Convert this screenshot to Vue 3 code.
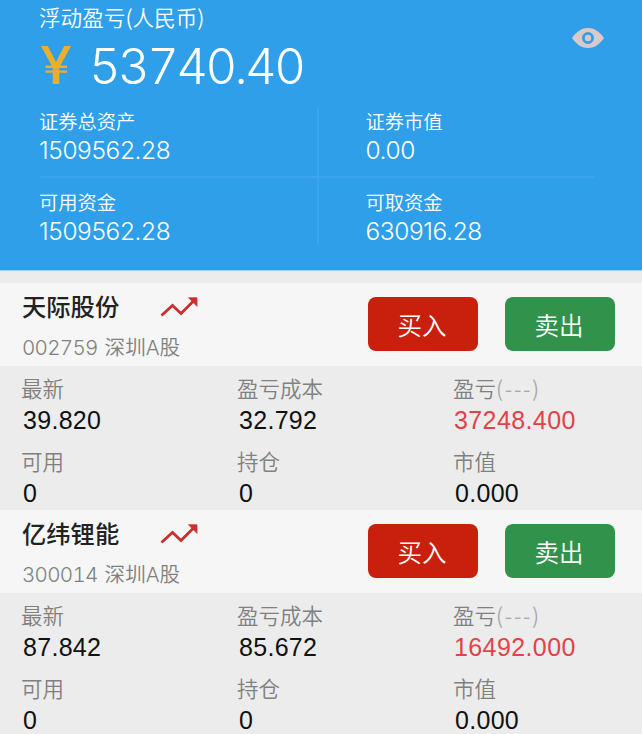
<script setup>
const assets = [
  { label: '证券总资产', value: '1509562.28' },
  { label: '证券市值', value: '0.00' },
  { label: '可用资金', value: '1509562.28' },
  { label: '可取资金', value: '630916.28' },
]

const stocks = [
  {
    name: '天际股份',
    code: '002759',
    market: '深圳A股',
    price: '39.820',
    cost: '32.792',
    profit: '37248.400',
    available: '0',
    position: '0',
    total: '0.000',
  },
  {
    name: '亿纬锂能',
    code: '300014',
    market: '深圳A股',
    price: '87.842',
    cost: '85.672',
    profit: '16492.000',
    available: '0',
    position: '0',
    total: '0.000',
  },
]
</script>

<template>
  <div class="page">
    <header class="summary">
      <div class="summary-top">
        <div>
          <div class="summary-title">浮动盈亏(人民币)</div>
          <div class="summary-total">
            <svg class="yen" viewBox="0 0 30 38" width="30" height="38">
              <path d="M0 0 H6.8 L15 16 L23.2 0 H30 L18.3 21.5 V38 H11.7 V21.5 Z" fill="#eab02c" />
              <path d="M4.5 20.8 H26 M4.5 25.6 H26" stroke="#eab02c" stroke-width="2.4" />
              <path d="M4.5 23.2 H26" stroke="#309fea" stroke-width="0.9" opacity="0.45" />
            </svg>
            <span>53740.40</span>
          </div>
        </div>
        <svg class="eye" viewBox="0 0 32 20" width="32" height="20">
          <path d="M0 10 C5 3 10 0 16 0 S27 3 32 10 C27 17 22 20 16 20 S5 17 0 10Z" fill="#d9c9cb" />
          <circle cx="16" cy="10" r="4.6" fill="none" stroke="#309fea" stroke-width="2.8" />
        </svg>
      </div>

      <div class="assets">
        <div v-for="item in assets" :key="item.label" class="asset">
          <div class="asset-label">{{ item.label }}</div>
          <div class="asset-value">{{ item.value }}</div>
        </div>
      </div>
    </header>

    <section v-for="stock in stocks" :key="stock.code" class="stock">
      <div class="stock-head">
        <div class="stock-info">
          <div class="stock-name">
            <span>{{ stock.name }}</span>
            <svg class="trend" viewBox="0 0 38 22" width="38" height="22">
              <path d="M1.5 18.5 L12.5 8.5 L21 16.5 L33 4.5" fill="none" stroke="#c93030" stroke-width="2.8" />
              <path d="M28.5 0.8 H37 V9.3 Z" fill="#c93030" stroke="#c93030" stroke-width="0.8" />
            </svg>
          </div>
          <div class="stock-code"><span class="code">{{ stock.code }}</span> {{ stock.market }}</div>
        </div>
        <div class="actions">
          <button class="btn buy">买入</button>
          <button class="btn sell">卖出</button>
        </div>
      </div>

      <div class="stock-body">
        <div class="cell">
          <div class="cell-label">最新</div>
          <div class="cell-value">{{ stock.price }}</div>
        </div>
        <div class="cell">
          <div class="cell-label">盈亏成本</div>
          <div class="cell-value">{{ stock.cost }}</div>
        </div>
        <div class="cell">
          <div class="cell-label">盈亏<span class="muted">(---)</span></div>
          <div class="cell-value up">{{ stock.profit }}</div>
        </div>
        <div class="cell">
          <div class="cell-label">可用</div>
          <div class="cell-value">{{ stock.available }}</div>
        </div>
        <div class="cell">
          <div class="cell-label">持仓</div>
          <div class="cell-value">{{ stock.position }}</div>
        </div>
        <div class="cell">
          <div class="cell-label">市值</div>
          <div class="cell-value">{{ stock.total }}</div>
        </div>
      </div>
    </section>
  </div>
</template>

<style>
body {
  margin: 0;
  overflow: hidden;
}
</style>

<style scoped>
.page {
  width: 642px;
  height: 734px;
  overflow: hidden;
  background: #ececec;
  font-family: 'Liberation Sans', 'Noto Sans CJK SC', sans-serif;
}

.summary {
  box-sizing: border-box;
  height: 271px;
  margin-bottom: 12px;
  padding: 2px 0 0 39px;
  border-bottom: 1px solid #a0d2f4;
  background: #309fea;
  color: #fff;
  font-family: Inter, 'Noto Sans CJK SC', sans-serif;
  font-weight: 300;
}

.summary-top {
  display: flex;
  justify-content: space-between;
  height: 105px;
  padding-right: 38px;
}

.summary-title {
  height: 30px;
  line-height: 30px;
  font-size: 21.6px;
  font-family: 'Noto Sans CJK SC', sans-serif;
  font-weight: 350;
}

.summary-total {
  display: flex;
  align-items: center;
  height: 69px;
  font-size: 49px;
  line-height: 69px;
  letter-spacing: -2.6px;
  font-variant-numeric: tabular-nums;
}

.yen {
  margin: -3px 18px 0 2px;
}

.eye {
  margin-top: 26px;
}

.assets {
  position: relative;
  display: grid;
  grid-template-columns: 326.5px 1fr;
  grid-template-rows: 80.5px 80.5px;
}

/* тонкие линии между ячейками */
.assets::before,
.assets::after {
  content: '';
  position: absolute;
  background: #3ba5ef;
}

.assets::before {
  top: 69px;
  left: 1px;
  width: 555px;
  height: 2px;
}

.assets::after {
  top: 1px;
  left: 278px;
  width: 2px;
  height: 137px;
}

.asset-label {
  height: 28px;
  line-height: 28px;
  font-size: 19.3px;
  font-family: 'Noto Sans CJK SC', sans-serif;
  font-weight: 350;
}

.asset-value {
  height: 31px;
  line-height: 31.5px;
  font-size: 24.5px;
  letter-spacing: -0.4px;
}

.stock-head {
  display: flex;
  justify-content: space-between;
  height: 83px;
  background: #f6f6f6;
}

.stock-info {
  padding: 9px 0 0 22px;
}

.stock-name {
  display: flex;
  align-items: center;
  height: 32px;
  line-height: 32px;
  font-size: 24.3px;
  font-weight: 500;
  color: #222;
}

.trend {
  margin-left: 41px;
}

.stock-code {
  margin-top: 7px;
  height: 32px;
  line-height: 33px;
  font-family: Inter, 'Noto Sans CJK SC', sans-serif;
  font-size: 20.6px;
  font-weight: 350;
  color: #808080;
  white-space: nowrap;
}

.code {
  margin-right: 1px;
  letter-spacing: -0.7px;
  font-variant-numeric: tabular-nums;
}

.actions {
  display: flex;
  gap: 27px;
  padding: 14px 27px 0 0;
}

.btn {
  width: 110px;
  height: 54px;
  padding: 0 2px 0 0;
  border: 0;
  border-radius: 8px;
  color: #fff;
  font-size: 24.5px;
  font-family: 'Noto Sans CJK SC', sans-serif;
  font-weight: 350;
}

.buy {
  background: #c8200d;
}

.sell {
  background: #30924b;
}

.stock-body {
  box-sizing: border-box;
  display: grid;
  grid-template-columns: 216px 216px 1fr;
  grid-template-rows: 73px 71px;
  height: 144px;
  padding: 7px 0 0 21px;
}

.cell-label {
  height: 31px;
  line-height: 29px;
  font-size: 21.5px;
  color: #808080;
  font-family: 'Noto Sans CJK SC', sans-serif;
  font-weight: 350;
}

.muted {
  letter-spacing: 1.7px;
  color: #aaa;
}

.cell-value {
  height: 32px;
  line-height: 32px;
  padding-left: 2px;
  font-size: 25px;
  letter-spacing: 0.3px;
  color: #111;
}

.up {
  padding-left: 1px;
  letter-spacing: 0.4px;
  color: #e2424a;
}
</style>
